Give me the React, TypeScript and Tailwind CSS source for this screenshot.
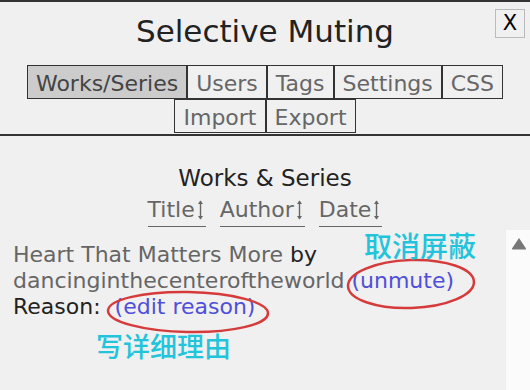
import React from 'react';

const tabsTop = ['Works/Series', 'Users', 'Tags', 'Settings', 'CSS'];
const tabsBottom = ['Import', 'Export'];

function Tab({ label, active }: { label: string; active?: boolean }) {
  return (
    <div
      className={`border border-[#333] px-[8px] pt-[4px] leading-[28px] text-[22px] ${
        active ? 'bg-[#cccccc] text-[#444]' : 'bg-[#f0f0f0] text-[#666]'
      }`}
    >
      {label}
    </div>
  );
}

function SortArrow() {
  return (
    <svg width="11" height="22" viewBox="0 0 11 22" className="inline-block align-[-4px]">
      <line x1="5.5" y1="2" x2="5.5" y2="20" stroke="#666" strokeWidth="1.4" />
      <path d="M3 5 L5.5 1.5 L8 5 Z" fill="#666" />
      <path d="M3 17 L5.5 20.5 L8 17 Z" fill="#666" />
    </svg>
  );
}

function SortHeader({ label }: { label: string }) {
  return (
    <span className="inline-block border-b border-[#666] pb-[2px] leading-[28px] text-[22px] text-[#666]">
      {label}
      <SortArrow />
    </span>
  );
}

export default function App() {
  return (
    <div className="relative h-[390px] w-[530px] overflow-hidden border-t-2 border-[#333] bg-[#f0f0f0] font-['DejaVu_Sans',sans-serif]">
      {/* header */}
      <div className="border-b-2 border-[#333] pb-px pt-[11px]">
        <h1 className="text-center text-[31px] leading-[36px] text-[#222]">Selective Muting</h1>
        <div className="mt-[16px] flex justify-center">
          {tabsTop.map((t, i) => (
            <Tab key={t} label={t} active={i === 0} />
          ))}
        </div>
        <div className="flex justify-center">
          {tabsBottom.map(t => (
            <Tab key={t} label={t} />
          ))}
        </div>
      </div>

      <button className="absolute left-[495px] top-[7px] flex h-[29px] w-[30px] items-center justify-center border border-[#bbb] bg-[#f0f0f0] text-[21px] leading-none text-black">
        X
      </button>

      {/* works section */}
      <div className="pt-[27px]">
        <h2 className="text-center text-[23px] leading-[30px] text-[#222]">Works &amp; Series</h2>
        <div className="mt-[3px] flex justify-center gap-[14px]">
          <SortHeader label="Title" />
          <SortHeader label="Author" />
          <SortHeader label="Date" />
        </div>

        <div className="mt-[3px] flex h-[160px]">
          <div className="flex-1 pl-[13px] pt-[12px] text-[22px] leading-[26px]">
            <div>
              <span className="text-[#666]">Heart That Matters More</span>
              <span className="text-[#222]"> by</span>
              <br />
              <span className="text-[#666]">dancinginthecenteroftheworld</span>{' '}
              <span className="text-[#4f4fd9]">(unmute)</span>
            </div>
            <div className="text-[#222]">
              Reason: <span className="ml-[7px] text-[#4f4fd9]">(edit reason)</span>
            </div>
          </div>
          <div className="w-[24px] bg-[#fbfbfb] pl-[5px] pt-[7px]">
            <svg width="16" height="13" viewBox="0 0 16 13">
              <path d="M8 1 L15 11.5 Q15.5 12.5 14 12.5 L2 12.5 Q0.5 12.5 1 11.5 Z" fill="#777" />
            </svg>
          </div>
        </div>
      </div>

      {/* annotations */}
      <svg className="pointer-events-none absolute left-0 top-0" width="530" height="390" viewBox="0 0 530 390">
        <ellipse cx="411" cy="282" rx="63" ry="24" fill="none" stroke="#d63b3b" strokeWidth="2.5" transform="rotate(-2 411 282)" />
        <ellipse cx="188" cy="310" rx="80" ry="20" fill="none" stroke="#d63b3b" strokeWidth="2.5" transform="rotate(1 188 310)" />
      </svg>
      <div className="absolute left-[364px] top-[229px] font-['Noto_Sans_CJK_SC',sans-serif] text-[28px] font-medium leading-none text-[#22c4dc]">
        取消屏蔽
      </div>
      <div className="absolute left-[96px] top-[330px] font-['Noto_Sans_CJK_SC',sans-serif] text-[27px] font-medium leading-none text-[#22c4dc]">
        写详细理由
      </div>
    </div>
  );
}
